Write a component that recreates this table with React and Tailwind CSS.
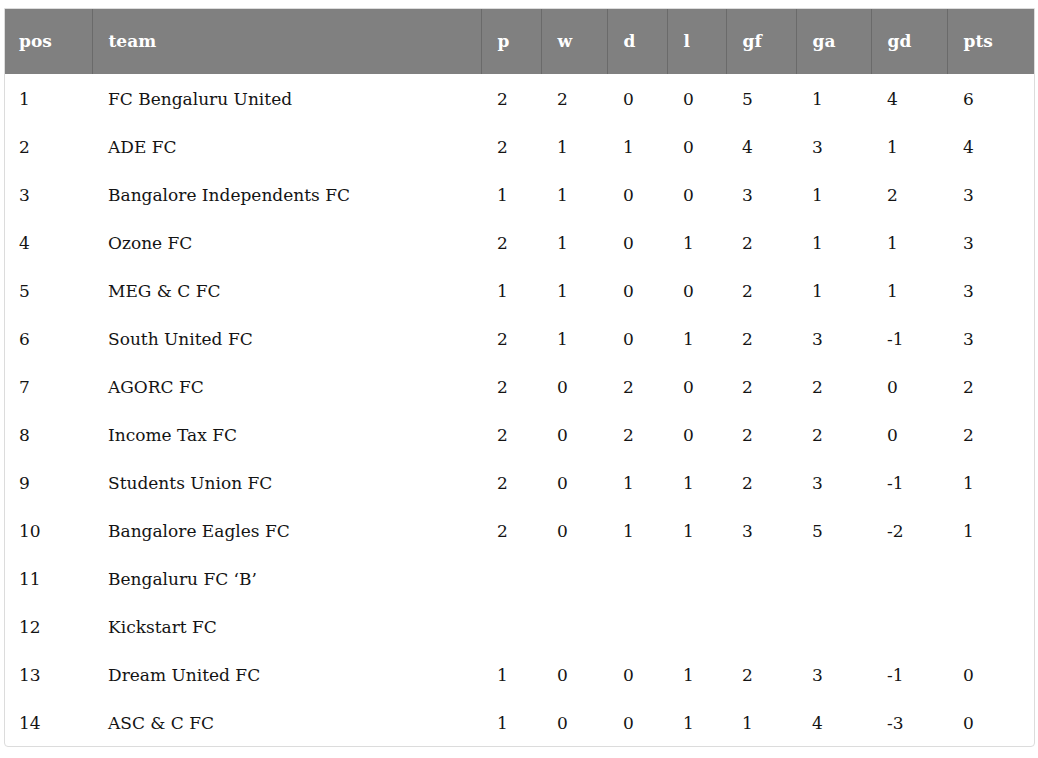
import React from "react";

const cols = [
  { key: "pos", w: "w-[87px]" },
  { key: "team", w: "w-[389px]" },
  { key: "p", w: "w-[60px]" },
  { key: "w", w: "w-[66px]" },
  { key: "d", w: "w-[60px]" },
  { key: "l", w: "w-[59px]" },
  { key: "gf", w: "w-[70px]" },
  { key: "ga", w: "w-[75px]" },
  { key: "gd", w: "w-[76px]" },
  { key: "pts", w: "w-[87px]" },
];

const rows = [
  ["1", "FC Bengaluru United", "2", "2", "0", "0", "5", "1", "4", "6"],
  ["2", "ADE FC", "2", "1", "1", "0", "4", "3", "1", "4"],
  ["3", "Bangalore Independents FC", "1", "1", "0", "0", "3", "1", "2", "3"],
  ["4", "Ozone FC", "2", "1", "0", "1", "2", "1", "1", "3"],
  ["5", "MEG & C FC", "1", "1", "0", "0", "2", "1", "1", "3"],
  ["6", "South United FC", "2", "1", "0", "1", "2", "3", "-1", "3"],
  ["7", "AGORC FC", "2", "0", "2", "0", "2", "2", "0", "2"],
  ["8", "Income Tax FC", "2", "0", "2", "0", "2", "2", "0", "2"],
  ["9", "Students Union FC", "2", "0", "1", "1", "2", "3", "-1", "1"],
  ["10", "Bangalore Eagles FC", "2", "0", "1", "1", "3", "5", "-2", "1"],
  ["11", "Bengaluru FC \u2018B\u2019", "", "", "", "", "", "", "", ""],
  ["12", "Kickstart FC", "", "", "", "", "", "", "", ""],
  ["13", "Dream United FC", "1", "0", "0", "1", "2", "3", "-1", "0"],
  ["14", "ASC & C FC", "1", "0", "0", "1", "1", "4", "-3", "0"],
];

export default function App() {
  return (
    <div className="bg-white w-[1038px] h-[758px] pt-[8px] pl-[4px]" style={{ fontFamily: '"DejaVu Serif", serif' }}>
      <div className="w-[1031px] border border-[#dcdcdc] rounded-b-[4px] overflow-hidden">
        <table className="table-fixed border-collapse w-[1029px] text-[17px] text-[#141414]">
          <thead>
            <tr className="bg-[#808080] h-[65px]">
              {cols.map((c, i) => (
                <th
                  key={c.key}
                  className={`${c.w} text-left font-bold text-white align-middle ${i > 0 ? "pl-[16px] border-l border-[#6a6a6a]" : "pl-[14px]"}`}
                >
                  {c.key}
                </th>
              ))}
            </tr>
          </thead>
          <tbody>
            {rows.map((r, ri) => (
              <tr key={ri} className="h-[48px]">
                {r.map((v, ci) => (
                  <td key={ci} className={`pt-[3px] align-middle leading-none ${ci > 0 ? "pl-[16px]" : "pl-[14px]"}`}>
                    {v}
                  </td>
                ))}
              </tr>
            ))}
          </tbody>
        </table>
      </div>
    </div>
  );
}
